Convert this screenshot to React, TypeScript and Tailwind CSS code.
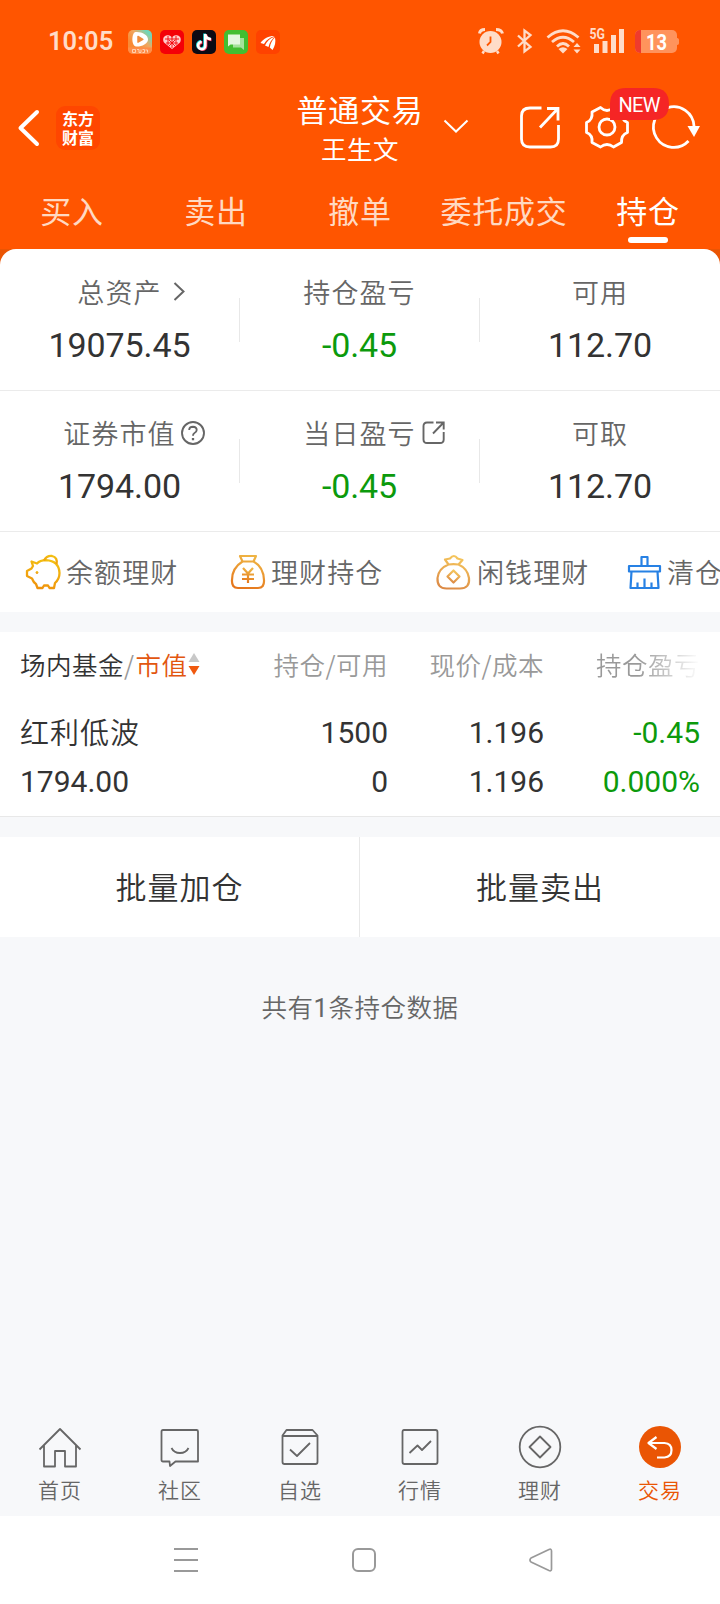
import type { ReactNode } from "react";

const CJK = "font-['Noto_Sans_CJK_SC',sans-serif]";
const NUM = "font-['Roboto','Noto_Sans_CJK_SC',sans-serif]";

function StatusBar() {
  return (
    <div className="flex h-[80px] items-start pt-[29px] pl-[48px] text-[#ffdcc8]">
      <div className={`${NUM} mt-[-1px] w-[80px] text-[25.500px] leading-[26px] font-semibold`}>10:05</div>
      <div className="mt-px flex gap-[8px]">
        <svg width="24" height="24" viewBox="0 0 24 24">
          <defs>
            <linearGradient id="video" x1="0" y1="1" x2="1" y2="0">
              <stop offset="0.3" stopColor="#f98a35" />
              <stop offset="0.6" stopColor="#f0a860" />
              <stop offset="0.85" stopColor="#72d6b8" />
            </linearGradient>
          </defs>
          <rect width="24" height="24" rx="5" fill="url(#video)" />
          <path d="M7.500 2C14 1.500 20 5 20 9.500C20 14 13 17 8 16.500C3 16 3.500 2.500 7.500 2Z" fill="#fff" />
          <path d="M10 6.500L14.800 9.300L10 12.100Z" fill="#f08c3c" stroke="#f08c3c" strokeWidth="1.500" strokeLinejoin="round" />
          <path d="M0 17.500H24V19A5 5 0 0 1 19 24H5A5 5 0 0 1 0 19Z" fill="#ff8d48" />
          <path d="M4.500 19.500h3v3h-3zM9 19.500h2v3h2v-3M14.500 19.500h2v3h-2M17.500 20h2v2.500" fill="none" stroke="#ffd0b0" strokeWidth="1" />
        </svg>
        <svg width="24" height="24" viewBox="0 0 24 24">
          <rect width="24" height="24" rx="5" fill="#f40008" />
          <path d="M12 19L4 12.500C2 9 4 5 7.500 5.200C10 5 11 6 12 7.500C13 6 14 5 16.500 5.200C20 5 22 9 20 12.500Z" fill="#fcc" />
          <path d="M5 9H19M6 13H18M8 6V15M16 6V15M12 7V18M9 10L15 16M15 10L9 16" stroke="#f40008" strokeWidth="0.900" fill="none" />
        </svg>
        <svg width="24" height="24" viewBox="0 0 24 24">
          <rect width="24" height="24" rx="5" fill="#0c0a14" />
          <path d="M12.600 3.500V15.200A3.600 3.600 0 1 1 9 11.500M12.600 4C13 7 15 8.500 18.500 8.800" fill="none" stroke="#20dfe0" strokeWidth="2.800" />
          <path d="M14 4.500V16.200A3.600 3.600 0 1 1 10.400 12.500M14 5C14.500 8 16 9.500 19.600 9.800" fill="none" stroke="#f5304f" strokeWidth="2.800" />
          <path d="M13.300 4V15.700A3.600 3.600 0 1 1 9.700 12M13.300 4.500C13.800 7.500 15.500 9 19 9.300" fill="none" stroke="#fff" strokeWidth="2.600" />
        </svg>
        <svg width="24" height="24" viewBox="0 0 24 24">
          <rect width="24" height="24" rx="5" fill="#43be31" />
          <path d="M9 8H20V20L17 17.500H9Z" fill="#a5e29b" />
          <path d="M4 4.500H16V14.500H6.500L4 16.500Z" fill="#e3f7df" />
        </svg>
        <svg width="24" height="24" viewBox="0 0 24 24">
          <rect width="24" height="24" rx="5" fill="#ff4200" />
          <path d="M4.500 13C8 8 13 5.800 18.500 6C14 7.500 10.500 9.500 8 14ZM9 15.500C11 11 14 8 18.800 6.700C15.500 9.500 13.500 12.500 12.500 17ZM13.800 17.500C14.500 13.500 16 10 19 7.500C20 12 19 16 16.500 20Z" fill="#fff" />
        </svg>
      </div>
      <svg className="mt-[-2px] ml-[197px]" width="206" height="30" viewBox="477 27 206 30" fill="none">
        <circle cx="490.500" cy="42" r="11" fill="#ffdcc8" />
        <path d="M479.500 33.500Q480 29.500 485 29.500M496 29.500Q501.500 29.500 502.500 33.500" stroke="#ffdcc8" strokeWidth="3" />
        <path d="M484 51L482.500 53.500M497 51L498.500 53.500" stroke="#ffdcc8" strokeWidth="2.500" />
        <path d="M490.500 36.500V42L487 45.500" stroke="#ff5500" strokeWidth="1.800" />
        <path d="M518 35.500L530.500 47L524.500 51.500V30.500L530.500 35L518 46.500" stroke="#ffdcc8" strokeWidth="2.300" />
        <g stroke="#ffdcc8" strokeWidth="2.800">
          <path d="M547.500 37.500Q563 24 578.500 37.500" />
          <path d="M552 42Q563 32.500 574 42" />
          <path d="M557 46.500Q563 40.500 569 46.500" />
        </g>
        <path d="M558.500 49Q563 45.500 567.500 49L563 53.500Z" fill="#ffdcc8" />
        <path d="M573.500 47L577 43L580.500 47ZM573.500 49.500H580.500L577 53.500Z" fill="#ffdcc8" />
        <path d="M594 44h5v9h-5zM602.500 41h5v12h-5zM611 35h5v18h-5zM619 29h5v24h-5z" fill="#ffdcc8" />
        <text x="589.500" y="39" fill="#ffdcc8" className="font-[Roboto] text-[14.500px] font-bold" textLength="15.500" lengthAdjust="spacingAndGlyphs">5G</text>
        <rect x="635" y="30" width="42" height="23" rx="5" fill="#ff935c" />
        <path d="M641 30V53H640A5 5 0 0 1 635 48V35A5 5 0 0 1 640 30Z" fill="#ef3b2d" />
        <path d="M677 38Q679.500 38 679 41.500Q679.500 45 677 45Z" fill="#ff935c" />
        <text x="646" y="49.500" fill="#fff" className="font-[Roboto] text-[21.500px] font-bold" textLength="21" lengthAdjust="spacingAndGlyphs">13</text>
      </svg>
    </div>
  );
}

function Header() {
  return (
    <div className="flex h-[98px] items-start text-white">
      <svg className="mt-[28px] ml-[16px]" width="26" height="40" viewBox="0 0 26 40" fill="none" stroke="#fff" strokeWidth="4" strokeLinecap="round" strokeLinejoin="round">
        <path d="M21 4L4.500 20L21 36" />
      </svg>
      <div className="mt-[26px] ml-[14px] flex h-[44px] w-[44px] flex-col items-center justify-center rounded-[9px] bg-[#ff4600] pb-px font-['Noto_Sans_CJK_SC',sans-serif] text-[16px] leading-[19px] font-bold">
        <span>东方</span>
        <span>财富</span>
      </div>
      <div className={`${CJK} ml-[196px] flex w-[128px] flex-col items-center pt-[9px]`}>
        <div className="text-[31px] leading-[40px] tracking-[0.700px] whitespace-nowrap">普通交易</div>
        <div className="text-[25.500px] leading-[38px] tracking-[0.500px]">王生文</div>
      </div>
      <svg className="ml-[14px]" width="282" height="98" viewBox="438 80 282 98" fill="none" stroke="#fff" strokeLinecap="butt">
        <path d="M444.500 120.500L456 131.500L467.500 120.500" strokeWidth="2" />
        <g strokeWidth="2.800">
          <path d="M541.500 108H530Q521.500 108 521.500 116V139Q521.500 147 530 147H550.500Q558.500 147 558.500 139V125" />
          <path d="M547 108.500H558V120.500M557.500 109L540 127.500" />
        </g>
        <g strokeWidth="2.800" strokeLinejoin="round">
          <path d="M600.500 107.500Q607 113.500 613.500 107.500L621.500 112Q621 120 627.500 122.500V132.500Q621 135 621.500 142.500L613.500 147Q607 142 600.500 147L592 142.500Q593 135 586.500 132.500V122.500Q593 120 592 112Z" />
          <circle cx="607" cy="127" r="8" />
        </g>
        <path d="M694 126A20.300 20.300 0 1 0 688.500 141" strokeWidth="2.800" />
        <path d="M687.500 126H700L694 137Z" fill="#fff" stroke="none" />
        <path d="M610 120V104Q610 88 626 88H653Q669 88 669 104Q669 120 653 120Z" fill="#f52525" stroke="none" />
        <text x="618.500" y="112" fill="#fff" stroke="none" className="font-[Roboto] text-[20px]" textLength="42">NEW</text>
      </svg>
    </div>
  );
}

const tabs = ["买入", "卖出", "撤单", "委托成交", "持仓"];

function Tabs() {
  return (
    <div className={`${CJK} grid h-[71px] grid-cols-5 text-[31px] leading-[40px] tracking-[0.700px] text-[#ffd9c2]`}>
      {tabs.map((t, i) => (
        <div key={t} className={i === 4 ? "flex flex-col items-center pt-[12px] text-white" : "flex flex-col items-center pt-[12px]"}>
          <span className="whitespace-nowrap">{t}</span>
          {i === 4 && <span className="mt-[7px] h-[6px] w-[40px] rounded-[3px] bg-white" />}
        </div>
      ))}
    </div>
  );
}

function Metric({ label, value, green, icon }: { label: string; value: string; green?: boolean; icon?: ReactNode }) {
  return (
    <div className="flex min-w-[239px] flex-col items-center pt-[23px] last:flex-1">
      <div className={`${CJK} flex h-[40px] items-center text-[27px] leading-[40px] font-[350] tracking-[1.100px] text-[#666]`}>
        <span className="whitespace-nowrap">{label}</span>
        <span className="flex w-0">{icon}</span>
      </div>
      <div className={green ? `${NUM} mt-[13px] text-[34px] leading-[40px] tracking-[-0.100px] text-[#0c9a0c]` : `${NUM} mt-[13px] text-[34px] leading-[40px] tracking-[-0.100px] text-[#333]`}>
        {value}
      </div>
    </div>
  );
}

const Bar = () => <div className="mt-[49px] h-[44px] w-px shrink-0 bg-[#e8e8e8]" />;

const chevron = (
  <svg className="ml-[11px] shrink-0" width="12" height="22" viewBox="0 0 12 22" fill="none" stroke="#666" strokeWidth="2">
    <path d="M1.500 2L10.500 10.500L1.500 19" />
  </svg>
);
const help = (
  <svg className="ml-[4px] shrink-0" width="26" height="26" viewBox="0 0 26 26" fill="none" stroke="#666" strokeWidth="1.900">
    <circle cx="13" cy="13" r="11" />
    <path d="M9.200 10Q9.300 6.700 13 6.700Q16.700 6.800 16.700 10Q16.600 12 14.500 13Q13 13.800 13 15.800" />
    <path d="M13 18V20.300" strokeWidth="2.300" />
  </svg>
);
const share = (
  <svg className="ml-[6px] shrink-0" width="24" height="24" viewBox="0 0 24 24" fill="none" stroke="#666" strokeWidth="1.900">
    <path d="M11.500 1.500H5Q1.500 1.500 1.500 5V18.500Q1.500 22 5 22H18Q21.700 22 21.700 18.500V11M14 1.500H21.700V8.500M21.200 2L11 12.500" />
  </svg>
);

const orangeGrad = (id: string, a: string, b: string) => (
  <defs>
    <linearGradient id={id} x1="0.600" y1="0" x2="0.300" y2="1">
      <stop stopColor={a} />
      <stop offset="1" stopColor={b} />
    </linearGradient>
  </defs>
);

const shortcuts = [
  {
    label: "余额理财",
    width: "w-[205px]",
    icon: (
      <svg width="36" height="36" viewBox="0 0 36 36" fill="none" stroke="url(#pig)" strokeWidth="2.300" strokeLinejoin="round">
        {orangeGrad("pig", "#f3bf12", "#ef920c")}
        <path d="M6.500 7.500L12 9.500Q15 6.200 21 6.200Q34 7 34.500 19Q34.500 25 30 29L29 34H24.500L23 31.500H19L17.500 34H12.500L11 30Q8.500 28.500 7 24.500L2 22V17L6.500 14.500L8 12Z" />
        <path d="M19 6.500Q21.500 1.500 27 2Q33 3.500 31.500 10" />
        <circle cx="12" cy="18.500" r="1" fill="#efac12" strokeWidth="1" />
      </svg>
    ),
  },
  {
    label: "理财持仓",
    width: "w-[206px]",
    icon: (
      <svg width="36" height="36" viewBox="0 0 36 36" fill="none" stroke="url(#yen)" strokeWidth="2.200" strokeLinejoin="round">
        {orangeGrad("yen", "#efb443", "#e5761c")}
        <path d="M10 2H26L23.500 7.500H12.500ZM12.500 7.500Q2 14 2 26Q1.500 34 8 34H28Q34.500 34 34 26Q33.500 13 23.500 7.500" />
        <path d="M13 14L18 19.500L23 14M18 19.500V29M12 20.500H24M12 25H24" />
      </svg>
    ),
  },
  {
    label: "闲钱理财",
    width: "w-[190px]",
    icon: (
      <svg width="36" height="36" viewBox="0 0 36 36" fill="none" stroke="url(#bag)" strokeWidth="2.200" strokeLinejoin="round">
        {orangeGrad("bag", "#f5c65c", "#dc8a45")}
        <path d="M12.500 10.500L9 5.500L14 4.500Q18 -0.500 21.500 4.500L26.500 6L22.500 10.500Q17.500 9.800 12.500 10.500ZM12.500 10.500Q2.500 14.500 1.500 24Q1 34.500 10.500 34.500H24Q34 34.500 33 24Q31.500 14.500 22.500 10.500" />
        <path d="M17.500 16.500L23.500 22.500L17.500 28.500L11.500 22.500Z" />
      </svg>
    ),
  },
  {
    label: "清仓",
    width: "w-[120px]",
    icon: (
      <svg width="36" height="36" viewBox="0 0 36 36" fill="none" stroke="#2781e4" strokeWidth="2.200" strokeLinejoin="round">
        <path d="M15.500 12V3H21.500V12M3 12H34V17.500H3ZM5.500 17.500L4.500 34H32.500L31.500 17.500M11.500 34V28.500M18.500 34V24.500M25.500 34V28.500" />
      </svg>
    ),
  },
];

function Cell({ a, b, className }: { a: string; b: string; className: string }) {
  return (
    <div className={`${NUM} ${className} flex flex-col items-end text-[30px] leading-[49px]`}>
      <span>{a}</span>
      <span>{b}</span>
    </div>
  );
}

const navItems: { label: string; icon: ReactNode }[] = [
  { label: "首页", icon: <path d="M2 25L22.500 4.500L43 25M6.500 21V42H17.500V26.500H27.500V42H38.500V21" /> },
  {
    label: "社区",
    icon: <path d="M5.500 5.500H39Q40.500 5.500 40.500 7V37H18L12.500 41.500L12 37H5.500Q4 37 4 35.500V7Q4 5.500 5.500 5.500ZM14 23.500Q16.500 28.500 22.500 28.500Q28.500 28.500 31 23.500" />,
  },
  {
    label: "自选",
    icon: <path d="M9 5.500H35L40 11V37.500Q40 39.500 38 39.500H7Q5 39.500 5 37.500V11ZM5 11.500H40M12.500 25L19.500 31.500L32.500 18.500" />,
  },
  {
    label: "行情",
    icon: <path d="M6.500 5.500H38Q40 5.500 40 7.500V37.500Q40 39.500 38 39.500H7Q5 39.500 5 37.500V7.500Q5 5.500 6.500 5.500ZM12 28.500L20 21L24.500 25.500L33.500 16.500" />,
  },
  {
    label: "理财",
    icon: (
      <>
        <circle cx="22.500" cy="22.500" r="20.300" />
        <path d="M22.500 12L33 22.500L22.500 33L12 22.500Z" />
      </>
    ),
  },
  {
    label: "交易",
    icon: (
      <>
        <circle cx="22.500" cy="22.500" r="21" fill="#ea5504" stroke="none" />
        <path d="M19 12.500L11 18.500L19 24.500M11 18.500H27Q34 19 34 25.500Q34 32.500 27 33H19.500" stroke="#fff" strokeWidth="2.200" />
      </>
    ),
  },
];

export default function App() {
  return (
    <div className="flex h-[1604px] w-[720px] flex-col overflow-hidden bg-[#f7f8fa]">
      <div className="h-[249px] shrink-0 bg-[#ff5500]">
        <StatusBar />
        <Header />
        <Tabs />
      </div>

      <div className="shrink-0 bg-[#ea5504]">
        <div className="overflow-hidden rounded-t-[16px] bg-white">
          <div className="flex h-[142px] border-b border-[#ebebeb]">
            <Metric label="总资产" value="19075.45" icon={chevron} />
            <Bar />
            <Metric label="持仓盈亏" value="-0.45" green />
            <Bar />
            <Metric label="可用" value="112.70" />
          </div>
          <div className="flex h-[141px] border-b border-[#ebebeb]">
            <div className="mt-[-1px] flex w-full">
              <Metric label="证券市值" value="1794.00" icon={help} />
              <Bar />
              <Metric label="当日盈亏" value="-0.45" green icon={share} />
              <Bar />
              <Metric label="可取" value="112.70" />
            </div>
          </div>
          <div className={`${CJK} flex h-[80px] pl-[25px] text-[27px] leading-[40px] font-[350] tracking-[1.100px] text-[#666]`}>
            {shortcuts.map((s) => (
              <div key={s.label} className={`${s.width} flex shrink-0 items-center gap-[5px] whitespace-nowrap`}>
                {s.icon}
                <span>{s.label}</span>
              </div>
            ))}
          </div>
        </div>
      </div>

      <div className="mt-[20px] h-[185px] shrink-0 bg-white">
        <div className={`${CJK} flex h-[66px] items-center pb-[3px] text-[25.500px] leading-[40px] font-[350] tracking-[0.500px] text-[#999]`}>
          <div className="flex w-[200px] items-center pl-[20px] whitespace-nowrap">
            <span className="text-[#333]">场内基金</span>
            <span>/</span>
            <span className="ml-px text-[#e2560f]">市值</span>
            <svg className="shrink-0" width="12" height="24" viewBox="0 0 12 24">
              <path d="M0.500 10L6 1L11.500 10Z" fill="#c8c8c8" />
              <path d="M0.500 14L6 23L11.500 14Z" fill="#f0590e" />
            </svg>
          </div>
          <div className="w-[188px] text-right">持仓/可用</div>
          <div className="w-[156px] text-right">现价/成本</div>
          <div className="w-[156px] bg-linear-to-r from-[#999] from-60% to-white bg-clip-text text-right text-transparent">持仓盈亏</div>
        </div>
        <div className="flex h-[119px] border-b border-[#e8e8e8] pt-[10px] text-[#333]">
          <div className="w-[200px] pl-[20px]">
            <div className={`${CJK} h-[49px] text-[29px] leading-[46px] font-[350] tracking-[1px]`}>红利低波</div>
            <div className={`${NUM} text-[30px] leading-[49px]`}>1794.00</div>
          </div>
          <Cell a="1500" b="0" className="w-[188px]" />
          <Cell a="1.196" b="1.196" className="w-[156px]" />
          <Cell a="-0.45" b="0.000%" className="w-[156px] text-[#0c9a0c]" />
        </div>
      </div>

      <div className={`${CJK} mt-[20px] flex h-[100px] shrink-0 bg-white text-[31px] leading-[98px] font-[350] tracking-[1px] text-[#333]`}>
        <div className="w-[360px] border-r border-[#e8e8e8] text-center">批量加仓</div>
        <div className="w-[360px] text-center">批量卖出</div>
      </div>

      <div className={`${NUM} mt-[51px] text-center text-[25.500px] leading-[40px] font-[350] tracking-[0.500px] text-[#666]`}>
        共有<span className="font-normal">1</span>条持仓数据
      </div>

      <div className={`${CJK} mt-auto grid h-[96px] shrink-0 grid-cols-6 text-[21px] leading-[30px] font-[350] tracking-[1px] text-[#666]`}>
        {navItems.map((n, i) => (
          <div key={n.label} className="flex flex-col items-center pt-[4px]">
            <svg width="46" height="46" viewBox="-0.500 -0.500 46 46" fill="none" stroke="#666" strokeWidth="1.800" strokeLinejoin="round">
              {n.icon}
            </svg>
            <span className={i === 5 ? "mt-[4px] text-[#ea5504]" : "mt-[4px]"}>{n.label}</span>
          </div>
        ))}
      </div>

      <div className="h-[88px] shrink-0 bg-white pt-[31px] pl-[172px]">
        <svg width="382" height="26" viewBox="172 0 382 26" fill="none" stroke="#999" strokeWidth="2" strokeLinejoin="round">
          <path d="M174 2H198M174 13H198M174 24H198" />
          <rect x="353" y="2" width="22" height="22" rx="5" />
          <path d="M549 2.500Q551.500 1.500 551.500 4V22Q551.500 24.500 549 23.500L531 15Q529 13 531 11Z" strokeWidth="1.700" />
        </svg>
      </div>
    </div>
  );
}
